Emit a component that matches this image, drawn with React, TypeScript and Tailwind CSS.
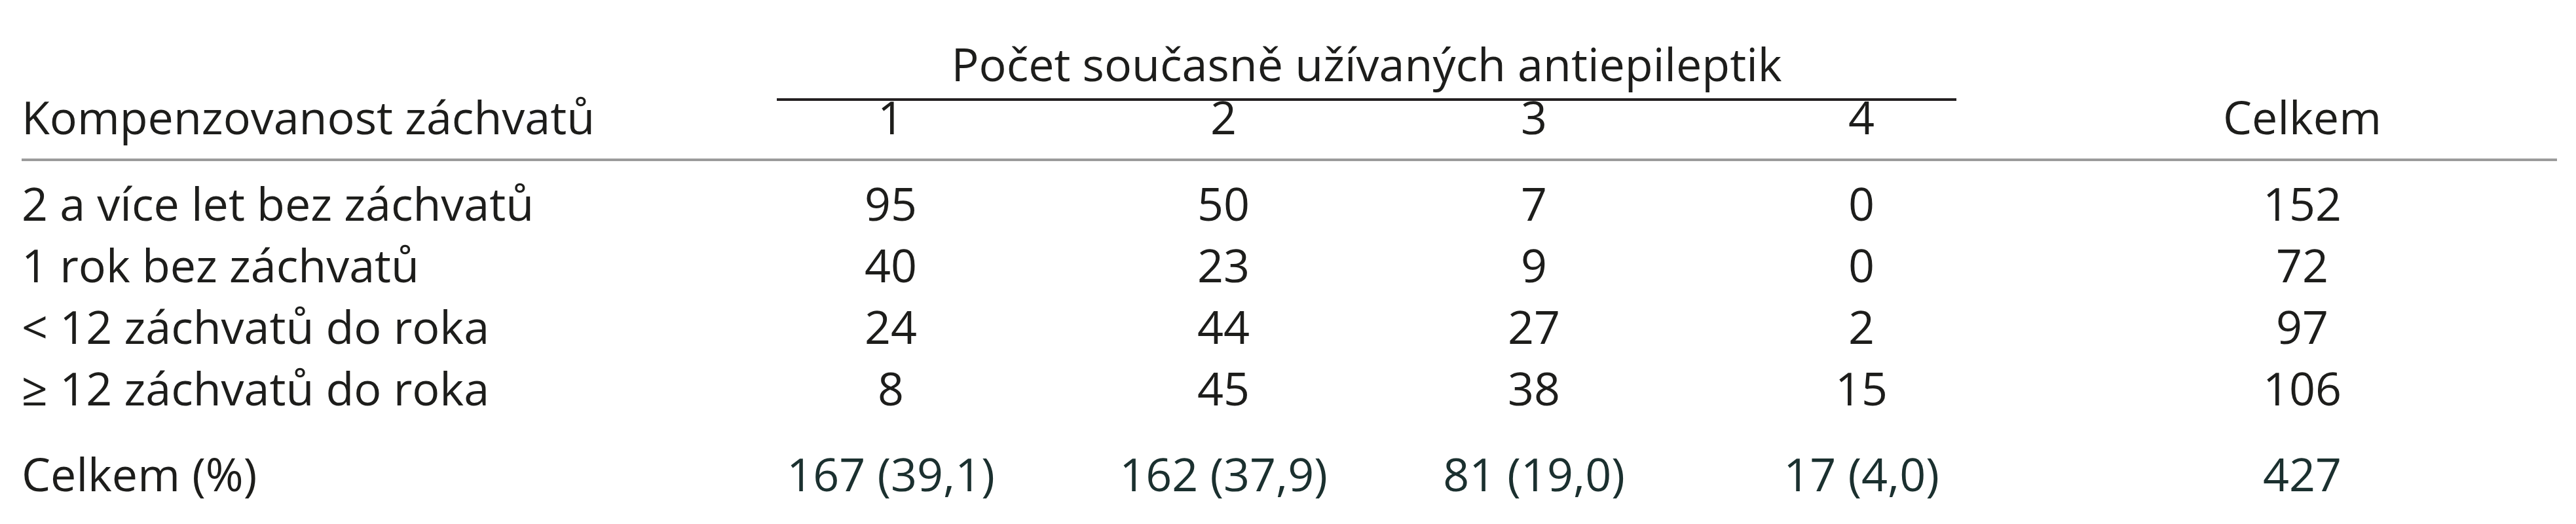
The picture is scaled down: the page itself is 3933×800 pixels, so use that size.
const cols = 'grid grid-cols-[1077px_500px_516px_432px_568px_778px]';

const rows = [
  { label: '2 a více let bez záchvatů', values: ['95', '50', '7', '0'], total: '152' },
  { label: '1 rok bez záchvatů', values: ['40', '23', '9', '0'], total: '72' },
  { label: '< 12 záchvatů do roka', values: ['24', '44', '27', '2'], total: '97' },
  { label: '≥ 12 záchvatů do roka', values: ['8', '45', '38', '15'], total: '106' },
];

const totals = ['167 (39,1)', '162 (37,9)', '81 (19,0)', '17 (4,0)'];

export default function App() {
  return (
    <div className="min-h-[800px] w-[3933px] bg-white font-['Open_Sans','Noto_Sans',sans-serif] text-[70px] font-normal text-[#1d1d1b]">
      <div className="ml-[33px] w-[3871px] pt-[61px]">
        {/* spanning header */}
        <div className={cols}>
          <div />
          <div className="col-span-4 ml-[76px] mr-[139px] border-b-4 border-[#231f20] pb-[17px] text-center leading-[72px]">
            Počet současně užívaných antiepileptik
          </div>
          <div />
        </div>

        {/* column headers */}
        <div className={`${cols} leading-[48px]`}>
          <div>Kompenzovanost záchvatů</div>
          <div className="text-center">1</div>
          <div className="text-center">2</div>
          <div className="text-center">3</div>
          <div className="text-center">4</div>
          <div className="pl-[104px] pr-[104px] text-center">Celkem</div>
        </div>

        <div className="mt-[40px] h-1 bg-[#9b9b9b]" />

        <div className="mt-[17px]">
          {rows.map((r) => (
            <div key={r.label} className={`${cols} leading-[94px]`}>
              <div>{r.label}</div>
              {r.values.map((v, i) => (
                <div key={i} className="text-center">
                  {v}
                </div>
              ))}
              <div className="pl-[104px] pr-[104px] text-center">{r.total}</div>
            </div>
          ))}
        </div>

        <div className={`${cols} mt-[37px] leading-[94px]`}>
          <div>Celkem (%)</div>
          {totals.map((t) => (
            <div key={t} className="text-center text-[#1b302f]">
              {t}
            </div>
          ))}
          <div className="pl-[104px] pr-[104px] text-center text-[#1b302f]">427</div>
        </div>
      </div>
    </div>
  );
}
